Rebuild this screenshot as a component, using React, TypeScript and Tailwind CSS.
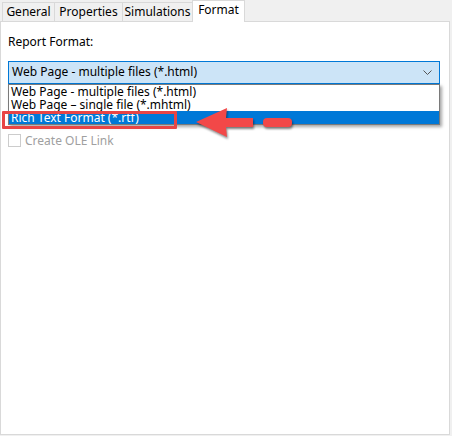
import { useState } from 'react';

type Tab = { label: string; width: string };

const tabs: Tab[] = [
  { label: 'General', width: 'w-[52px]' },
  { label: 'Properties', width: 'w-[68px]' },
  { label: 'Simulations', width: 'w-[70px]' },
];

const formats = [
  'Web Page - multiple files (*.html)',
  'Web Page \u2013 single file (*.mhtml)',
  'Rich Text Format (*.rtf)',
];

export default function App() {
  const [selected] = useState(2);

  return (
    <div
      className="relative w-[452px] h-[436px] bg-[#f0f0f0] text-[12px] text-black overflow-hidden"
      style={{ fontFamily: '"Noto Sans", "Open Sans", sans-serif' }}
    >
      {/* Tabs */}
      <div className="flex items-end h-[21px] pl-[2px]">
        {tabs.map((t) => (
          <div
            key={t.label}
            className={`${t.width} h-[19px] border-t border-l border-[#d9d9d9] bg-[#f0f0f0] flex items-center justify-center leading-none`}
          >
            {t.label}
          </div>
        ))}
        <div className="relative z-10 -mb-px w-[53px] h-[22px] border border-b-0 border-[#d9d9d9] bg-white flex items-center justify-center leading-none pb-[3px]">
          Format
        </div>
      </div>

      {/* Panel */}
      <div className="w-[450px] h-[414px] border border-[#d9d9d9] bg-white pl-[7px] pr-[10px]">
        <div className="h-[39px] pt-[12px] leading-[16px]">Report Format:</div>
        <div className="h-[23px] border border-[#0078d7] bg-[#cce4f7] flex items-center justify-between pl-[3px] pr-[7px] w-[432px]">
          <span className="leading-none pb-px">{formats[0]}</span>
          <svg width="9" height="6" viewBox="0 0 9 6" className="mt-px">
            <polyline points="0.5,0.5 4.5,4.5 8.5,0.5" fill="none" stroke="#555" strokeWidth="1" />
          </svg>
        </div>
        <label className="mt-[50px] flex items-center gap-[4px] text-[#a0a0a0] leading-none">
          <span className="w-[13px] h-[13px] border border-[#cccccc] bg-white" />
          Create OLE Link
        </label>
      </div>

      {/* Dropdown list */}
      <div className="absolute left-[8px] top-[84px] w-[432px] border border-[#7a7a7a] bg-white shadow-[2px_2px_3px_rgba(0,0,0,0.35)]">
        {formats.map((f, i) => (
          <div
            key={f}
            className={`h-[13px] pl-[2px] leading-[13px] ${
              i === selected ? 'bg-[#0078d7] text-white' : ''
            }`}
          >
            {f}
          </div>
        ))}
      </div>

      {/* Annotation */}
      <div className="absolute left-[2px] top-[111px] w-[175px] h-[18px] border-[3px] border-[#e84545] rounded-[1px]" />
      <svg
        className="absolute left-[190px] top-[104px]"
        width="110"
        height="40"
        viewBox="190 104 110 40"
        style={{ filter: 'drop-shadow(1px 2px 1px rgba(0,0,0,0.45))' }}
      >
        <polygon
          points="196,122 227,108 226,118 253,118 253,127 226,127 227,137"
          fill="#f24848"
        />
        <rect x="263" y="118" width="29" height="9" rx="4" fill="#f24848" />
      </svg>
    </div>
  );
}
